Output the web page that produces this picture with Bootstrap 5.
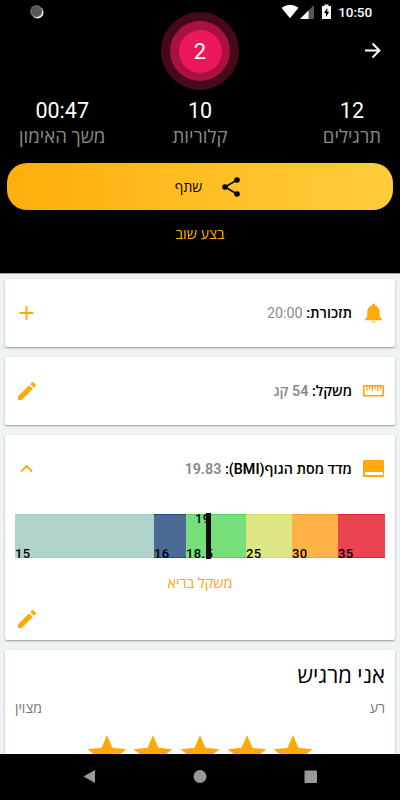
<!DOCTYPE html>
<html lang="he" dir="rtl">
<head>
<meta charset="utf-8">
<meta name="viewport" content="width=device-width, initial-scale=1">
<title>סיכום אימון</title>
<link href="https://cdn.jsdelivr.net/npm/bootstrap@5.3.0/dist/css/bootstrap.min.css" rel="stylesheet">
<style>
body{font-family:Roboto,"Open Sans","Noto Sans",sans-serif;background:#eef2f3;color:#000;font-size:14px;line-height:20px}
.screen{height:800px}
.hero{height:274px;border-bottom:1px solid #a5a5a5;background:#000}
.status{height:24px;padding:0 28px 0 30px}
.clock{font-size:13.500px;font-weight:500;line-height:24px;letter-spacing:-.1px}
.rings{width:78px;height:78px;background:#450a1a;margin-top:-12px}
.rings .mid{width:60px;height:60px;background:#aa1141}
.rings .core{width:43px;height:43px;background:#ed185a;font-size:22px;padding-top:2px}
.topbar{height:66px;padding:0 16px}
.topbar>.side{width:22px}
.stats{padding:8px 19px 0;height:73px}
.num{font-size:21.500px;line-height:26px}
.lbl{font-size:18.600px;line-height:27px;color:#8a8a8a}
.share{height:47px;margin:0 7px;padding-left:16px;border-radius:20px;background:linear-gradient(90deg,#ffae0b,#ffcd3b);gap:19px;font-size:14px}
.again{font-size:14.400px;font-weight:500;color:#ffad0c;line-height:20px;margin-top:15px}
.feed{padding:5px 5px 0;gap:10px}
.tile{background:#fff;border-radius:2px;box-shadow:0 1px 2px rgba(0,0,0,.38)}
.line{height:68px;padding:0 10px;gap:10px}
.line svg,.editrow svg{display:block}
.cap{font-weight:600;font-size:14.300px}
.cap .val{color:#888}
.bmi{height:205px}
.scale{margin:11px 10px 0;height:44px;font-weight:500;font-size:13px;letter-spacing:.4px}
.scale .seg{border-top:1px solid;border-bottom:1px solid}
.scale .seg span{line-height:12px;white-space:nowrap;margin-bottom:-3px}
.s1{width:139px;background:#b0d3cd;border-color:#a2c9c3!important}
.s2{width:32px;background:#4b6b94;border-color:#1e4b83!important}
.s3{width:60px;background:#76df79;border-color:#58d35c!important}
.s4{width:46px;background:#dde683;border-color:#d3de6b!important}
.s5{width:46px;background:#ffb347;border-color:#ff9f2b!important}
.s6{width:47px;background:#e94450;border-color:#ea1b36!important}
.pointer{left:191px;top:-1px;width:5px;height:46px;background:#0b0b0b}
.pointer-num{left:180px;top:-2px;line-height:14px}
.verdict{font-size:14.400px;color:#ffa50d;line-height:20px;margin-top:16px}
.editrow{padding:13px 10px 0}
.mood{height:104px;padding:0 10px;border-bottom-left-radius:0;border-bottom-right-radius:0}
.mood h2{font-size:22px;line-height:28px;margin:0;padding-top:12px;font-weight:400}
.mood .ends{color:#757575;margin-top:8px}
.stars{gap:6.600px;margin-top:13px}
.navkeys{height:46px;background:#000}
</style>
</head>
<body>
<div class="screen d-flex flex-column overflow-hidden">
  <header class="hero text-white flex-shrink-0">
    <div class="status d-flex align-items-center justify-content-between" dir="ltr">
      <svg width="14" height="14" viewBox="0 0 14 14"><circle cx="7.500" cy="7.500" r="6" fill="#fff"/><circle cx="6.300" cy="6.300" r="6" fill="#555"/><circle cx="6.300" cy="6.300" r="5.500" fill="none" stroke="#888" stroke-width="1.200" stroke-dasharray="1 1"/></svg>
      <div class="d-flex align-items-center">
        <svg width="52" height="16" viewBox="0 0 52 16"><path d="M-.5 3.800Q8-2.300 16.500 3.800L8 14.300Z" fill="#fff"/><path d="M32 1V15H18Z" fill="#555"/><path d="M26.500 6.500V15H18Z" fill="#fff"/><path d="M42.500.5h4V2H49v13h-9V2h2.500Z" fill="#fff"/><path d="M45.300 4 42 9h2v4l3.200-5.200h-1.900Z" fill="#000"/></svg>
        <span class="clock ps-1">10:50</span>
      </div>
    </div>
    <div class="topbar d-flex justify-content-between">
      <svg class="side" width="22" height="53" viewBox="0 0 22 53"><path d="M3 26.500H17.500M10.500 19.500l7 7-7 7" fill="none" stroke="#fff" stroke-width="2"/></svg>
      <div class="rings rounded-circle d-flex align-items-center justify-content-center">
        <div class="mid rounded-circle d-flex align-items-center justify-content-center">
          <div class="core rounded-circle d-flex align-items-center justify-content-center">2</div>
        </div>
      </div>
      <div class="side"></div>
    </div>
    <div class="stats row g-0 text-center">
      <div class="col d-flex justify-content-start"><div><div class="num">12</div><div class="lbl">תרגילים</div></div></div>
      <div class="col"><div class="num">10</div><div class="lbl">קלוריות</div></div>
      <div class="col d-flex justify-content-end"><div><div class="num">00:47</div><div class="lbl">משך האימון</div></div></div>
    </div>
    <div class="share d-flex align-items-center justify-content-center text-black">
      <svg width="20" height="22" viewBox="0 0 20 22"><path d="M16 4 4 11l12 7" fill="none" stroke="#000" stroke-width="1.500"/><circle cx="16" cy="4" r="2.800"/><circle cx="4" cy="11" r="2.800"/><circle cx="16" cy="18" r="2.800"/></svg>
      <span>שתף</span>
    </div>
    <div class="again text-center">בצע שוב</div>
  </header>

  <main class="feed d-flex flex-column flex-grow-1 overflow-hidden">
    <section class="tile line d-flex align-items-center flex-shrink-0">
      <svg width="23" height="24" viewBox="0 0 24 24" fill="#ffa90a"><path d="M12 22c1.100 0 2-.6 2-1.500h-4c0 .9.900 1.500 2 1.500zm6.500-6v-5.500c0-3.200-1.900-5.700-5-6.400V3.500a1.500 1.500 0 0 0-3 0v.6c-3.100.7-5 3.200-5 6.400V16l-2.300 2.300v1.200h17.600v-1.200z"/></svg>
      <div class="cap flex-grow-1">תזכורת: <span class="val fw-normal">20:00</span></div>
      <svg width="23" height="24" viewBox="0 0 23 24"><path d="M11.500 5v14M4.500 12h14" stroke="#ffa90a" stroke-width="1.800"/></svg>
    </section>
    <section class="tile line d-flex align-items-center flex-shrink-0">
      <svg width="23" height="24" viewBox="0 0 23 24" fill="none" stroke="#ffa30a"><rect x="1.800" y="6.700" width="19.500" height="10" rx=".8" stroke-width="1.600"/><path d="M5 7v5M7.700 7v3.500M10.400 7v5M13.100 7v3.500M15.800 7v5M18.500 7v3.500" stroke-width="1.200"/></svg>
      <div class="cap flex-grow-1">משקל: <span class="val">54 קג</span></div>
      <svg width="24" height="24" viewBox="0 0 24 24" fill="#ffa90a"><path d="M3 17.250V21h3.750L17.810 9.940l-3.750-3.750zM20.710 7.040a1 1 0 0 0 0-1.410l-2.340-2.340a1 1 0 0 0-1.410 0l-1.830 1.830 3.750 3.750z"/></svg>
    </section>
    <section class="tile bmi flex-shrink-0">
      <div class="line d-flex align-items-center">
        <svg width="23" height="24" viewBox="0 0 23 24"><rect x="1" y="3" width="21" height="17" rx="1.500" fill="#ffa90a"/><path d="M3 15h18v3H3z" fill="#fff"/></svg>
        <div class="cap flex-grow-1">מדד מסת הגוף(BMI): <span class="val">19.83</span></div>
        <svg width="23" height="24" viewBox="0 0 23 24"><path d="m6 14.500 5.500-5.500L17 14.500" fill="none" stroke="#ffa90a" stroke-width="1.800"/></svg>
      </div>
      <div class="scale d-flex position-relative" dir="ltr">
        <div class="seg s1 d-flex align-items-end"><span>15</span></div>
        <div class="seg s2 d-flex align-items-end"><span>16</span></div>
        <div class="seg s3 d-flex align-items-end"><span>18.5</span></div>
        <div class="seg s4 d-flex align-items-end"><span>25</span></div>
        <div class="seg s5 d-flex align-items-end"><span>30</span></div>
        <div class="seg s6 d-flex align-items-end"><span>35</span></div>
        <span class="pointer-num position-absolute">19</span>
        <div class="pointer position-absolute"></div>
      </div>
      <div class="verdict text-center">משקל בריא</div>
      <div class="editrow d-flex justify-content-end">
        <svg width="24" height="24" viewBox="0 0 24 24" fill="#ffa90a"><path d="M3 17.250V21h3.750L17.810 9.940l-3.750-3.750zM20.710 7.040a1 1 0 0 0 0-1.410l-2.340-2.340a1 1 0 0 0-1.410 0l-1.830 1.830 3.750 3.750z"/></svg>
      </div>
    </section>
    <section class="tile mood overflow-hidden flex-shrink-0">
      <h2>אני מרגיש</h2>
      <div class="ends d-flex justify-content-between"><span>רע</span><span>מצוין</span></div>
      <div class="stars d-flex justify-content-center">
        <svg width="40" height="40" viewBox="0 0 40 40"><path id="star" d="M20 4 25.500 16.800 39.500 18.300 28.500 27 32 40 20 33 8 40l3.500-13L.5 18.300 14.500 16.800Z" fill="#ffa90a"/></svg>
        <svg width="40" height="40" viewBox="0 0 40 40"><use href="#star"/></svg>
        <svg width="40" height="40" viewBox="0 0 40 40"><use href="#star"/></svg>
        <svg width="40" height="40" viewBox="0 0 40 40"><use href="#star"/></svg>
        <svg width="40" height="40" viewBox="0 0 40 40"><use href="#star"/></svg>
      </div>
    </section>
  </main>

  <nav class="navkeys d-flex align-items-center justify-content-center flex-shrink-0" dir="ltr">
    <svg width="240" height="16" viewBox="0 0 240 16" fill="#999"><path d="M15 1v13L3.500 7.500Z"/><circle cx="120" cy="7.500" r="6.500"/><rect x="224.500" y="1.500" width="12.500" height="12.500" rx="1"/></svg>
  </nav>
</div>
<script src="https://cdn.jsdelivr.net/npm/bootstrap@5.3.0/dist/js/bootstrap.bundle.min.js"></script>
</body>
</html>
